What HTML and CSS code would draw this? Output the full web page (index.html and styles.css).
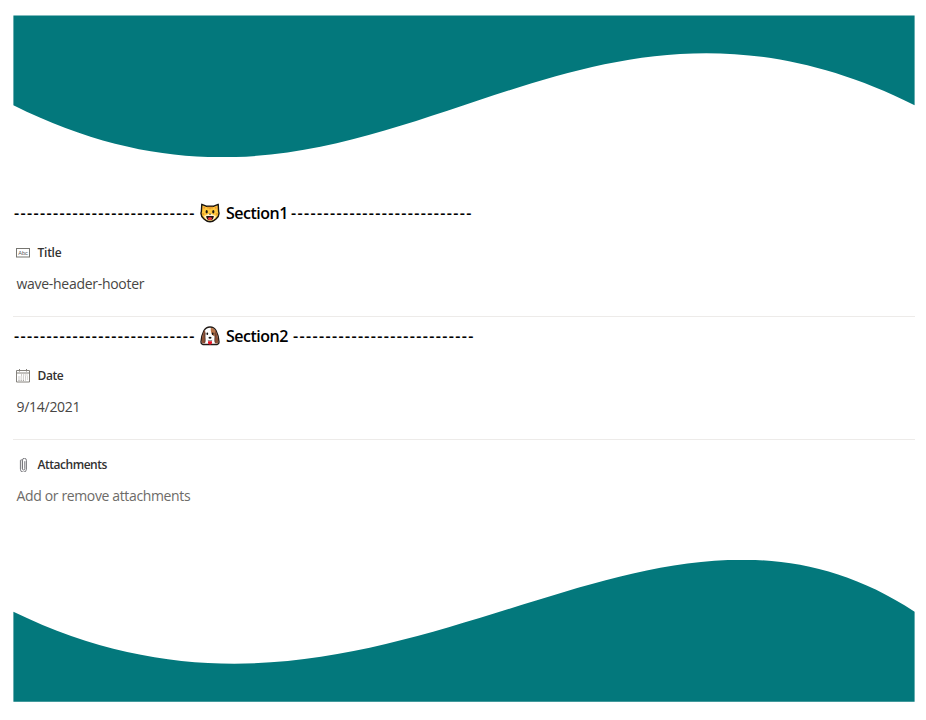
FILE: index.html
```html
<!DOCTYPE html>
<html lang="en">
<head>
<meta charset="utf-8">
<title>wave-header-hooter</title>
<link rel="stylesheet" href="styles.css">
</head>
<body>
<main class="form">
  <svg class="wave" viewBox="0 0 902 142" aria-hidden="true"><path d="M.4.4H901.6V90.200C539-90 363 270.400 .4 90.200Z"/></svg>

  <section class="section first">
    <h2 class="section-title">
      <span class="dashes">----------------------------</span>
      <svg class="emoji" viewBox="0 0 20 20" aria-hidden="true">
        <path d="M1.800 1.300 6.200 3.200h7.600L18.200 1.300l.4 7.200c1.200 3-.3 5.500-2.600 7.500-1.700 1.700-3.500 2.700-6 2.700s-4.300-1-6-2.700C1.700 14 .2 11.500 1.400 8.500z" fill="#ffc83d" stroke="#171310" stroke-width="1.400" stroke-linejoin="round"/>
        <path d="M3.400 3.500l2 1.100-1.700 2zM16.600 3.500l-2 1.100 1.700 2z" fill="#f08a35"/>
        <path d="M8 3.500v2M10 3.500v2.800M12 3.500v2M2.200 11h2M15.800 11h2" stroke="#d67d20" stroke-width="1"/>
        <path d="M4 13c2-.2 4-2.200 6-2.200s4 2 6 2.200c-1 3-3.200 4.600-6 4.600S5 16 4 13z" fill="#fff3d0"/>
        <ellipse cx="6.700" cy="8.700" rx="1.100" ry="1.700" fill="#171310"/><ellipse cx="13.300" cy="8.700" rx="1.100" ry="1.700" fill="#171310"/>
        <path d="M8.800 10.800h2.400L10 12z" fill="#171310"/>
        <path d="M6.200 13h7.600c0 2.800-1.500 4.200-3.800 4.200S6.200 15.800 6.200 13z" fill="#24110f"/><ellipse cx="10" cy="15.700" rx="2.100" ry="1.400" fill="#f03a42"/>
      </svg>
      <span class="name one">Section1</span>
      <span class="dashes">----------------------------</span>
    </h2>
    <div class="label">
      <svg class="icon" viewBox="0 0 14 14" aria-hidden="true"><rect x=".5" y="2.500" width="13" height="8.500" fill="#fff" stroke="#777671"/><text class="abc" x="2.200" y="8.700" textLength="9.600">Abc</text></svg>
      <span class="label-title">Title</span>
    </div>
    <div class="value file">wave-header-hooter</div>
  </section>

  <section class="section">
    <h2 class="section-title">
      <span class="dashes">----------------------------</span>
      <svg class="emoji" viewBox="0 0 20 20" aria-hidden="true">
        <path d="M4 4.500C5.500 2 7.500 1 10 1s4.500 1 6 3.500c1.500 3 3 8.500 3 11.500 0 2-2 3-4 2.500H5C3 19 1 18 1 16c0-3 1.500-8.500 3-11.500z" fill="#fff" stroke="#211a17" stroke-width="1.400"/>
        <path d="M5 3.800C3.300 5.500 1.700 11.500 1.700 15.700c0 1.700 2.200 2.300 3.200 1.500C5.700 15 4.700 11 5.400 7z" fill="#8d5136"/>
        <path d="M15 3.800c1.700 1.700 3.300 7.700 3.300 11.900 0 1.700-2.200 2.300-3.200 1.500-.8-2.200.2-6.200-.5-10.200z" fill="#8d5136"/>
        <path d="M10.800 1.700c2 0 3.500 1 4.200 2.500l-.3 6c-2.500 0-4.300-4-3.900-8.500z" fill="#b87448"/>
        <path d="M5.200 6.700C4.500 10 5.800 13 5 16.500M14.800 6.700c.7 3.300-.6 6.300.2 9.800" fill="none" stroke="#30201a" stroke-width=".6"/>
        <ellipse cx="7.300" cy="7.700" rx=".9" ry="1.300" fill="#171310"/><ellipse cx="12.700" cy="7.700" rx=".9" ry="1.300" fill="#171310"/>
        <ellipse cx="10" cy="11.700" rx="1.500" ry="1" fill="#171310"/><path d="M7.800 14.300c1 .6 3.400.6 4.400 0" fill="none" stroke="#39302b" stroke-width=".6"/>
        <path d="M8 15.200h4v1.500c0 2.400-4 2.400-4 0z" fill="#e81224"/>
      </svg>
      <span class="name two">Section2</span>
      <span class="dashes">----------------------------</span>
    </h2>
    <div class="label">
      <svg class="icon" viewBox="0 0 14 14" aria-hidden="true"><path d="M.5 1.500h13v11.500H.5zM.5 4h13M3.500 0v2.500M10.500 0v2.500" fill="none" stroke="#85827d"/><path d="M5 6h7M2.500 8h9.500M2.500 10h9.500M2.500 11.500h7" stroke="#9c9994" stroke-dasharray="1 1.200"/></svg>
      <span class="label-date">Date</span>
    </div>
    <div class="value date">9/14/2021</div>
  </section>

  <section class="attachments">
    <div class="label">
      <svg class="icon" viewBox="0 0 14 14" aria-hidden="true"><path d="M8.800 3.200v7.600a1.200 1.200 0 0 1-2.400 0V2.300a1.500 1.500 0 0 0-2 0v8.900a3 3 0 0 0 6 0V2.300a2 2 0 0 0-4 0v8.500" fill="none" stroke="#77777c"/></svg>
      <span class="label-files">Attachments</span>
    </div>
    <div class="value placeholder">Add or remove attachments</div>
  </section>

  <svg class="wave" viewBox="0 0 902 142" aria-hidden="true"><path d="M.4 51.700C371 231.700 627-128.300 901.600 51.700V141.700H.4Z"/></svg>
</main>
</body>
</html>
```

FILE: styles.css
```css
* { box-sizing: border-box; }
body { margin: 0; background: #fff; font-family: "Open Sans", "Noto Sans", sans-serif; }
.form { width: 902px; margin: 15px 0 0 13px; }
.wave { display: block; width: 902px; height: 142px; fill: #03787c; }
.section { height: 123px; padding-top: 8px; border-bottom: 1px solid #edebe9; }
.section.first { height: 125px; margin-top: 35px; padding-top: 10px; }
.section-title { display: flex; align-items: center; height: 22px; margin: 0; padding-left: 1px; font-size: 16px; line-height: 22px; font-weight: 600; color: #000; white-space: nowrap; }
.dashes { width: 182px; letter-spacing: 1.34px; }
.emoji { width: 20px; height: 20px; margin: 0 6px 0 4px; flex: none; }
.name { margin-right: 4px; letter-spacing: -.5px; }
.one { width: 61px; }
.two { width: 63px; }
.label { display: flex; align-items: center; height: 20px; margin-top: 19px; padding-left: 3px; font-size: 12px; line-height: 20px; font-weight: 600; color: #323130; white-space: nowrap; }
.icon { width: 14px; height: 14px; margin-right: 7.5px; flex: none; }
.label-title { letter-spacing: -.25px; }
.label-date { letter-spacing: -.4px; }
.label-files { letter-spacing: -.47px; }
.abc { font: 5.5px "Liberation Sans", sans-serif; fill: #555; }
.value { height: 22px; margin: 10px 0 0 3.5px; font-size: 14px; line-height: 22px; color: #484644; white-space: nowrap; }
.file { letter-spacing: -.29px; }
.date { letter-spacing: -.28px; }
.attachments { height: 120px; padding-top: 15px; }
.attachments .label { margin-top: 0; }
.placeholder { color: #6d6b68; letter-spacing: -.36px; }
```
